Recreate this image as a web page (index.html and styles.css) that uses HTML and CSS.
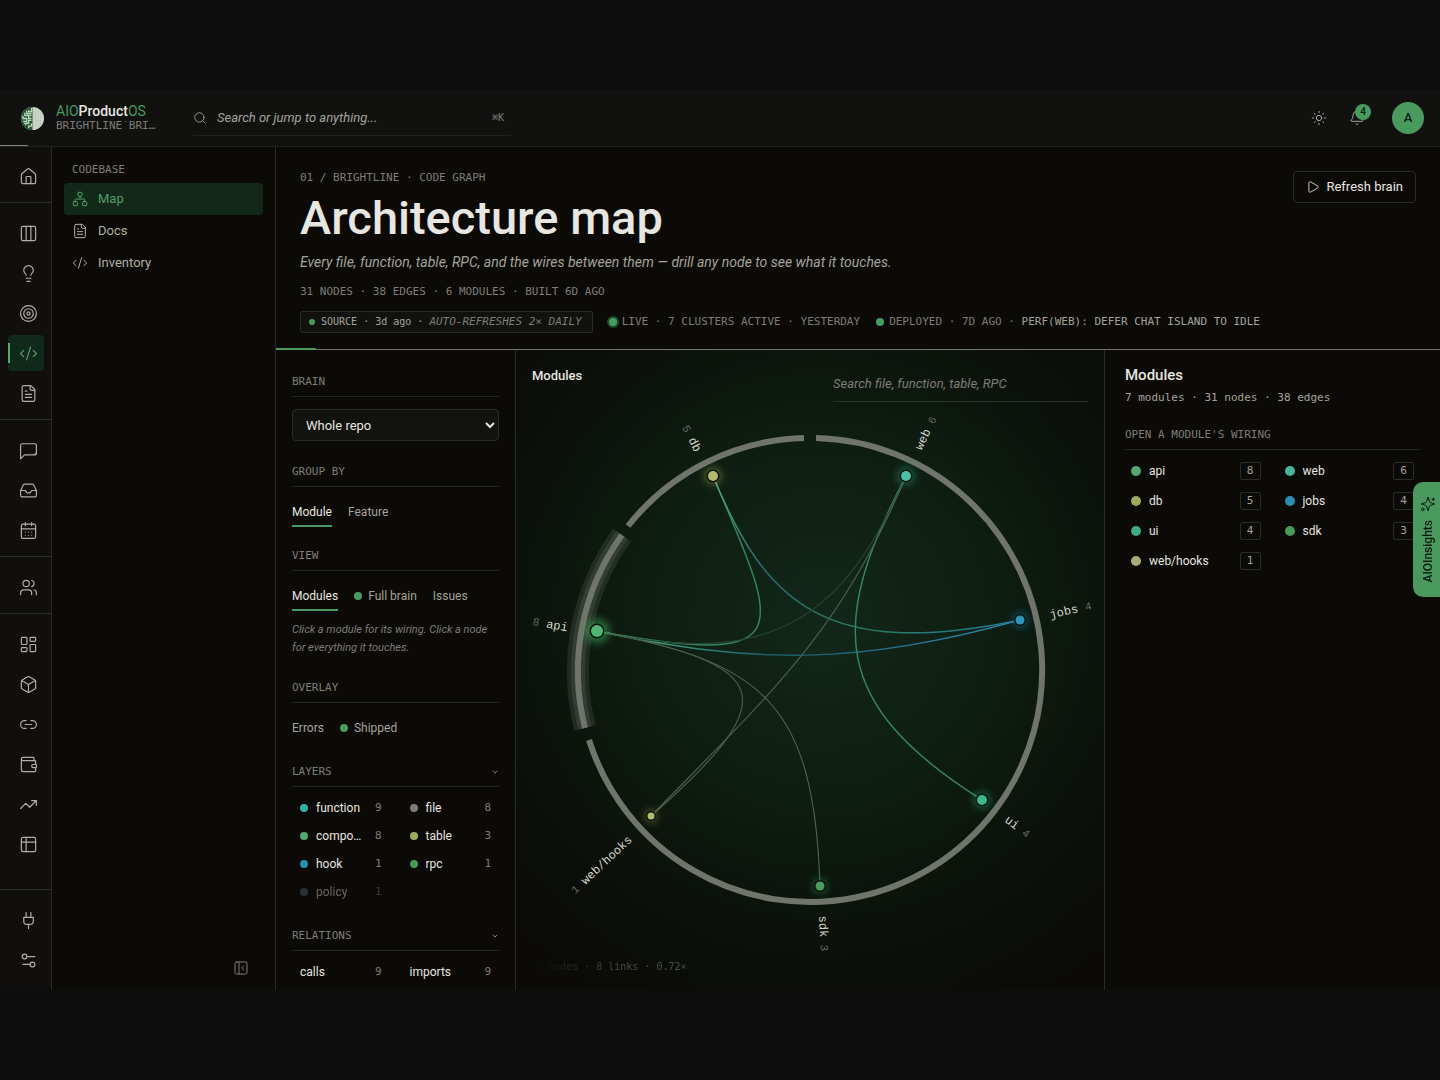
FILE: index.html
```
<!DOCTYPE html>
<html lang="en">
  <head>
    <meta charset="utf-8"/>
    <meta name="viewport" content="width=device-width, initial-scale=1"/>
    <title>Architecture map - AIOProductOS</title>
    <link rel="stylesheet" href="styles.css">
  </head>
  <body>
    <div class="app">
      <header class="topbar">
        <a class="brand" href="#">
          <svg class="brand-logo" viewBox="0 0 24 24">
            <circle cx="12" cy="12" r="12" fill="#cdd8ca"/>
            <path d="M12 0a12 12 0 0 0 0 24z" fill="#2a5236"/>
            <path d="M11 1v4H8V3M11 7H6V4M4 6v3h4v3h3M2 9v3h4v3H2M11 14H8v3H5v2M11 17v3H8v2M3 17h1M9 9h2" fill="none" stroke="#b9dcbc" stroke-width="1.4"/>
            <path d="M13 2v20M15.500 2v20M18 4v16M20.500 6v12" fill="none" stroke="#8fa38e" stroke-width=".7" stroke-dasharray="1 1.500"/>
          </svg>
          <span class="brand-text">
            <span class="brand-name"><em>AIO</em>Product<em>OS</em></span>
            <span class="brand-org">BRIGHTLINE˙BRI…</span>
          </span>
        </a>
        <label class="jump">
          <svg class="icon" viewBox="0 0 24 24"><circle cx="11" cy="11" r="8"/><path d="m21 21-4.300-4.300"/></svg>
          <input type="search" placeholder="Search or jump to anything..." aria-label="Search or jump to anything">
          <kbd>⌘K</kbd>
        </label>
        <div class="topbar-tools">
          <button class="tool" aria-label="Theme">
            <svg class="icon" viewBox="0 0 24 24"><circle cx="12" cy="12" r="4"/><path d="M12 2v2M12 20v2M4.930 4.930l1.410 1.410M17.660 17.660l1.410 1.410M2 12h2M20 12h2M6.340 17.660l-1.410 1.410M19.070 4.930l-1.410 1.410"/></svg>
          </button>
          <button class="tool" aria-label="Notifications">
            <svg class="icon" viewBox="0 0 24 24"><path d="M10.270 21a2 2 0 0 0 3.460 0M3.260 15.330A1 1 0 0 0 4 17h16a1 1 0 0 0 .740-1.670C19.410 13.960 18 12.500 18 8A6 6 0 0 0 6 8c0 4.500-1.410 5.960-2.740 7.330"/></svg>
            <span class="badge">4</span>
          </button>
          <button class="avatar" aria-label="Account">A</button>
        </div>
      </header>

      <nav class="rail" aria-label="Areas">
        <div class="rail-group">
          <a href="#" aria-label="Home"><svg class="icon" viewBox="0 0 24 24"><path d="M15 21v-8a1 1 0 0 0-1-1h-4a1 1 0 0 0-1 1v8"/><path d="M3 10a2 2 0 0 1 .710-1.530l7-6a2 2 0 0 1 2.580 0l7 6A2 2 0 0 1 21 10v9a2 2 0 0 1-2 2H5a2 2 0 0 1-2-2z"/></svg></a>
        </div>
        <div class="rail-group">
          <a href="#" aria-label="Board"><svg class="icon" viewBox="0 0 24 24"><rect x="3" y="3" width="18" height="18" rx="2"/><path d="M9 3v18M15 3v18"/></svg></a>
          <a href="#" aria-label="Ideas"><svg class="icon" viewBox="0 0 24 24"><path d="M15 14c.2-1 .7-1.700 1.500-2.500 1-.9 1.500-2.200 1.500-3.500A6 6 0 0 0 6 8c0 1 .2 2.200 1.500 3.500.7.7 1.300 1.500 1.500 2.500M9 18h6M10 22h4"/></svg></a>
          <a href="#" aria-label="Goals"><svg class="icon" viewBox="0 0 24 24"><circle cx="12" cy="12" r="10"/><circle cx="12" cy="12" r="6"/><circle cx="12" cy="12" r="2"/></svg></a>
          <a href="#" class="active" aria-label="Codebase"><svg class="icon" viewBox="0 0 24 24"><path d="m18 16 4-4-4-4M6 8l-4 4 4 4M14.500 4l-5 16"/></svg></a>
          <a href="#" aria-label="Documents"><svg class="icon" viewBox="0 0 24 24"><path d="M15 2H6a2 2 0 0 0-2 2v16a2 2 0 0 0 2 2h12a2 2 0 0 0 2-2V7z"/><path d="M14 2v4a2 2 0 0 0 2 2h4M10 9H8M16 13H8M16 17H8"/></svg></a>
        </div>
        <div class="rail-group">
          <a href="#" aria-label="Chat"><svg class="icon" viewBox="0 0 24 24"><path d="M21 15a2 2 0 0 1-2 2H7l-5 5V5a2 2 0 0 1 2-2h16a2 2 0 0 1 2 2v10a2 2 0 0 1-2 2" transform="translate(0 .5)"/></svg></a>
          <a href="#" aria-label="Inbox"><svg class="icon" viewBox="0 0 24 24"><path d="M22 12h-6l-2 3h-4l-2-3H2"/><path d="M5.450 5.110 2 12v6a2 2 0 0 0 2 2h16a2 2 0 0 0 2-2v-6l-3.450-6.890A2 2 0 0 0 16.760 4H7.240a2 2 0 0 0-1.790 1.110z"/></svg></a>
          <a href="#" aria-label="Calendar"><svg class="icon" viewBox="0 0 24 24"><rect x="3" y="4" width="18" height="18" rx="2"/><path d="M8 2v4M16 2v4M3 10h18M8 14h.01M12 14h.01M16 14h.01M8 18h.01M12 18h.01M16 18h.01"/></svg></a>
        </div>
        <div class="rail-group">
          <a href="#" aria-label="People"><svg class="icon" viewBox="0 0 24 24"><path d="M16 21v-2a4 4 0 0 0-4-4H6a4 4 0 0 0-4 4v2M22 21v-2a4 4 0 0 0-3-3.870M16 3.130a4 4 0 0 1 0 7.750"/><circle cx="9" cy="7" r="4"/></svg></a>
        </div>
        <div class="rail-group">
          <a href="#" aria-label="Dashboard"><svg class="icon" viewBox="0 0 24 24"><rect x="3" y="3" width="7" height="9" rx="1"/><rect x="14" y="3" width="7" height="5" rx="1"/><rect x="14" y="12" width="7" height="9" rx="1"/><rect x="3" y="16" width="7" height="5" rx="1"/></svg></a>
          <a href="#" aria-label="Packages"><svg class="icon" viewBox="0 0 24 24"><path d="M21 8a2 2 0 0 0-1-1.730l-7-4a2 2 0 0 0-2 0l-7 4A2 2 0 0 0 3 8v8a2 2 0 0 0 1 1.730l7 4a2 2 0 0 0 2 0l7-4A2 2 0 0 0 21 16zM3.300 7l8.700 5 8.700-5M12 22V12"/></svg></a>
          <a href="#" aria-label="Links"><svg class="icon" viewBox="0 0 24 24"><path d="M9 17H7A5 5 0 0 1 7 7h2M15 7h2a5 5 0 1 1 0 10h-2M8 12h8"/></svg></a>
          <a href="#" aria-label="Wallet"><svg class="icon" viewBox="0 0 24 24"><path d="M19 7V4a1 1 0 0 0-1-1H5a2 2 0 0 0 0 4h15a1 1 0 0 1 1 1v4h-3a2 2 0 0 0 0 4h3a1 1 0 0 0 1-1v-2a1 1 0 0 0-1-1M3 5v14a2 2 0 0 0 2 2h15a1 1 0 0 0 1-1v-4"/></svg></a>
          <a href="#" aria-label="Trends"><svg class="icon" viewBox="0 0 24 24"><path d="m22 7-8.500 8.500-5-5L2 17M16 7h6v6"/></svg></a>
          <a href="#" aria-label="Tables"><svg class="icon" viewBox="0 0 24 24"><rect x="3" y="3" width="18" height="18" rx="2"/><path d="M3 9h18M9 3v18"/></svg></a>
        </div>
        <div class="rail-group rail-bottom">
          <a href="#" aria-label="Integrations"><svg class="icon" viewBox="0 0 24 24"><path d="M12 22v-5M9 8V2M15 8V2M18 8v5a4 4 0 0 1-4 4h-4a4 4 0 0 1-4-4V8z"/></svg></a>
          <a href="#" aria-label="Settings"><svg class="icon" viewBox="0 0 24 24"><path d="M20 7h-9M14 17H5"/><circle cx="17" cy="17" r="3"/><circle cx="7" cy="7" r="3"/></svg></a>
        </div>
      </nav>

      <aside class="sidebar">
        <h2 class="mono">CODEBASE</h2>
        <a href="#" class="active"><svg class="icon" viewBox="0 0 24 24"><rect x="16" y="16" width="6" height="6" rx="1"/><rect x="2" y="16" width="6" height="6" rx="1"/><rect x="9" y="2" width="6" height="6" rx="1"/><path d="M5 16v-3a1 1 0 0 1 1-1h12a1 1 0 0 1 1 1v3M12 12V8"/></svg>Map</a>
        <a href="#"><svg class="icon" viewBox="0 0 24 24"><path d="M15 2H6a2 2 0 0 0-2 2v16a2 2 0 0 0 2 2h12a2 2 0 0 0 2-2V7z"/><path d="M14 2v4a2 2 0 0 0 2 2h4M10 9H8M16 13H8M16 17H8"/></svg>Docs</a>
        <a href="#"><svg class="icon" viewBox="0 0 24 24"><path d="m18 16 4-4-4-4M6 8l-4 4 4 4M14.500 4l-5 16"/></svg>Inventory</a>
        <button class="collapse" aria-label="Collapse sidebar"><svg class="icon" viewBox="0 0 24 24"><rect x="3" y="3" width="18" height="18" rx="2"/><path d="M9 3v18M16 15l-3-3 3-3"/></svg></button>
      </aside>

      <main class="page">
        <div class="page-head">
          <div class="page-title">
            <p class="mono">01 / BRIGHTLINE · CODE GRAPH</p>
            <h1>Architecture map</h1>
            <p class="lead">Every file, function, table, RPC, and the wires between them — drill any node to see what it touches.</p>
            <p class="mono">31 NODES · 38 EDGES · 6 MODULES · BUILT 6D AGO</p>
            <div class="status mono">
              <span class="source"><i class="dot small"></i><span>SOURCE · 3d ago · <em>AUTO-REFRESHES 2× DAILY</em></span></span>
              <span class="live"><i class="dot glow"></i>LIVE · 7 CLUSTERS ACTIVE · YESTERDAY</span>
              <span class="deployed"><i class="dot"></i><span>DEPLOYED · 7D AGO · <b>PERF(WEB): DEFER CHAT ISLAND TO IDLE</b></span></span>
            </div>
          </div>
          <button class="refresh"><svg class="icon" viewBox="0 0 24 24"><path d="M5 5a2 2 0 0 1 3.008-1.728l11.997 6.998a2 2 0 0 1 .003 3.458l-12 7A2 2 0 0 1 5 19z"/></svg>Refresh brain</button>
        </div>

        <div class="workspace">
          <section class="filters">
            <div class="filter">
              <h3 class="mono"><label for="brain">BRAIN</label></h3>
              <select id="brain"><option>Whole repo</option></select>
            </div>
            <div class="filter">
              <h3 class="mono">GROUP BY</h3>
              <div class="tabs"><button class="on">Module</button><button>Feature</button></div>
            </div>
            <div class="filter">
              <h3 class="mono">VIEW</h3>
              <div class="tabs"><button class="on">Modules</button><button><i class="dot"></i>Full brain</button><button>Issues</button></div>
              <p class="hint">Click a module for its wiring. Click a node for everything it touches.</p>
            </div>
            <div class="filter">
              <h3 class="mono">OVERLAY</h3>
              <div class="tabs"><button>Errors</button><button><i class="dot"></i>Shipped</button></div>
            </div>
            <div class="filter">
              <h3 class="mono">LAYERS <svg class="icon" viewBox="0 0 24 24"><path d="m6 9 6 6 6-6"/></svg></h3>
              <ul class="legend">
                <li><i class="dot c-teal"></i><span>function</span><b class="mono">9</b></li>
                <li><i class="dot c-grey"></i><span>file</span><b class="mono">8</b></li>
                <li title="component"><i class="dot c-api"></i><span>compo…</span><b class="mono">8</b></li>
                <li><i class="dot c-db"></i><span>table</span><b class="mono">3</b></li>
                <li><i class="dot c-jobs"></i><span>hook</span><b class="mono">1</b></li>
                <li><i class="dot c-sdk"></i><span>rpc</span><b class="mono">1</b></li>
                <li class="off"><i class="dot c-slate"></i><span>policy</span><b class="mono">1</b></li>
              </ul>
            </div>
            <div class="filter">
              <h3 class="mono">RELATIONS <svg class="icon" viewBox="0 0 24 24"><path d="m6 9 6 6 6-6"/></svg></h3>
              <ul class="legend">
                <li><span>calls</span><b class="mono">9</b></li>
                <li><span>imports</span><b class="mono">9</b></li>
              </ul>
            </div>
          </section>

          <section class="graph">
            <div class="graph-bar">
              <h2>Modules</h2>
              <input type="search" placeholder="Search file, function, table, RPC" aria-label="Search the graph">
            </div>
            <svg class="chord" viewBox="0 0 588 640">
              <defs>
                <filter id="glow" x="-1" y="-1" width="3" height="3"><feGaussianBlur stdDeviation="4"/></filter>
                <linearGradient id="db-jobs" gradientUnits="userSpaceOnUse" x1="197" y1="126" x2="504" y2="270"><stop offset="0" stop-color="#4fa870"/><stop offset=".25" stop-color="#2a6670"/><stop offset=".6" stop-color="#2b7a62"/><stop offset="1" stop-color="#277a98"/></linearGradient>
                <linearGradient id="api-jobs" gradientUnits="userSpaceOnUse" x1="81" y1="281" x2="504" y2="270"><stop offset="0" stop-color="#52c08a"/><stop offset=".4" stop-color="#1f5a66"/><stop offset="1" stop-color="#2b86a6"/></linearGradient>
              </defs>

              <!-- links -->
              <g class="links">
                <path class="strong" d="M197 126C262 280 290 320 81 281"/>
                <path d="M197 126C250 255 310 310 504 270" stroke="url(#db-jobs)"/>
                <path d="M81 281C240 315 345 315 504 270" stroke="url(#api-jobs)"/>
                <path class="strong" d="M390 126C312 275 314 354 466 450"/>
                <path class="faint" d="M390 126C325 275 250 318 81 281"/>
                <path class="thin" d="M390 126C326 280 259 339 135 466"/>
                <path class="thin" d="M81 281C255 315 273 345 135 466"/>
                <path class="thin" d="M81 281C245 312 298 350 304 536"/>
              </g>

              <!-- ring -->
              <g class="ring">
                <path class="halo" d="M69 378A232 232 0 0 1 106 185"/>
                <path class="halo inner" d="M69 378A232 232 0 0 1 106 185"/>
                <path d="M300 88A232 232 0 1 1 73 390"/>
                <path d="M69 378A232 232 0 0 1 106 185"/>
                <path d="M112 176A232 232 0 0 1 288 88"/>
              </g>

              <!-- module nodes -->
              <g class="halos" filter="url(#glow)">
                <circle cx="197" cy="126" r="8" fill="#9aa653"/>
                <circle cx="390" cy="126" r="8" fill="#2fa08a"/>
                <circle cx="504" cy="270" r="7" fill="#1f7fa6"/>
                <circle cx="466" cy="450" r="8" fill="#2c9c6f"/>
                <circle cx="304" cy="536" r="7" fill="#2f8146"/>
                <circle cx="135" cy="466" r="6" fill="#8d9440"/>
                <circle cx="81" cy="281" r="12" fill="#3fae62"/>
              </g>
              <g class="nodes">
                <circle cx="197" cy="126" r="5" fill="#b3ba70"/>
                <circle cx="390" cy="126" r="5" fill="#4cc0a4"/>
                <circle cx="504" cy="270" r="4.500" fill="#2e93b8"/>
                <circle cx="466" cy="450" r="5" fill="#3cb88b"/>
                <circle cx="304" cy="536" r="4.500" fill="#4c9d5c"/>
                <circle cx="135" cy="466" r="3.500" fill="#b4bd6a"/>
                <circle cx="81" cy="281" r="6" fill="#4fb673"/>
              </g>

              <g class="names" transform="translate(294 320)">
                <text x="246" y="4" transform="rotate(-64)">web <tspan>6</tspan></text>
                <text x="246" y="4" transform="rotate(-13)">jobs <tspan>4</tspan></text>
                <text x="246" y="4" transform="rotate(37)">ui <tspan>4</tspan></text>
                <text x="246" y="4" transform="rotate(87)">sdk <tspan>3</tspan></text>
                <text class="end" x="-246" y="4" transform="rotate(-43)"><tspan>1</tspan> web/hooks</text>
                <text class="end" x="-246" y="4" transform="rotate(10)"><tspan>8</tspan> api</text>
                <text class="end" x="-246" y="4" transform="rotate(63)"><tspan>5</tspan> db</text>
              </g>
            </svg>
            <p class="graph-note mono">7 nodes · 8 links · 0.72×</p>
          </section>

          <section class="detail">
            <h2>Modules</h2>
            <p class="mono">7 modules · 31 nodes · 38 edges</p>
            <h3 class="mono">OPEN A MODULE'S WIRING</h3>
            <ul class="modules">
              <li><i class="dot c-api"></i><a href="#">api</a><b class="mono">8</b></li>
              <li><i class="dot c-web"></i><a href="#">web</a><b class="mono">6</b></li>
              <li><i class="dot c-db"></i><a href="#">db</a><b class="mono">5</b></li>
              <li><i class="dot c-jobs"></i><a href="#">jobs</a><b class="mono">4</b></li>
              <li><i class="dot c-ui"></i><a href="#">ui</a><b class="mono">4</b></li>
              <li><i class="dot c-sdk"></i><a href="#">sdk</a><b class="mono">3</b></li>
              <li><i class="dot c-hooks"></i><a href="#">web/hooks</a><b class="mono">1</b></li>
            </ul>
          </section>
        </div>
      </main>

      <button class="insights">
        <svg class="icon" viewBox="0 0 24 24"><path d="M9.940 15.500A2 2 0 0 0 8.500 14.060l-6.140-1.580a.5.5 0 0 1 0-.960L8.500 9.940A2 2 0 0 0 9.940 8.500l1.580-6.140a.5.5 0 0 1 .960 0L14.060 8.500A2 2 0 0 0 15.500 9.940l6.140 1.580a.5.5 0 0 1 0 .960L15.500 14.060a2 2 0 0 0-1.440 1.440l-1.580 6.140a.5.5 0 0 1-.960 0zM20 3v4M22 5h-4"/><circle cx="4" cy="20" r="2"/></svg>
        <span>AIOInsights</span>
      </button>
    </div>
  </body>
</html>
```

FILE: styles.css
```
:root {
  color-scheme: dark;
  --bg: #0b0a06;
  --panel: #11110f;
  --line: #2a2a26;
  --text: #e8e6e0;
  --soft: #a5a39b;
  --mute: #7f7d76;
  --green: #4a9a60;
}
* {
  box-sizing: border-box;
}
body {
  margin: 0;
  height: 100vh;
  padding: 90px 0;
  background: #0d0d0d;
  color: var(--text);
  font-family: Roboto, "Liberation Sans", sans-serif;
  font-size: 13px;
  line-height: 16px;
}
h1, h2, h3, p, ul {
  margin: 0;
  padding: 0;
}
ul {
  list-style: none;
}
a {
  color: inherit;
  text-decoration: none;
}
button, input, select {
  font: inherit;
  color: inherit;
  background: none;
  border: 0;
  padding: 0;
  margin: 0;
}
input {
  outline: 0;
  min-width: 0;
  font-style: italic;
}
.icon {
  width: 16px;
  height: 16px;
  flex: none;
  fill: none;
  stroke: currentColor;
  stroke-width: 1.5;
  stroke-linecap: round;
  stroke-linejoin: round;
}
.mono {
  font-family: "DejaVu Sans Mono", "Liberation Mono", monospace;
  font-size: 11px;
  font-weight: 400;
  color: var(--mute);
}
.dot {
  width: 8px;
  height: 8px;
  border-radius: 50%;
  background: var(--green);
  flex: none;
}
.c-teal { background: #2fb3a3; }
.c-grey { background: #7d7c78; }
.c-api { background: #55a873; }
.c-db { background: #9dab5e; }
.c-jobs { background: #2a8fae; }
.c-sdk { background: #4a9a56; }
.c-web { background: #48b39a; }
.c-ui { background: #40aa86; }
.c-hooks { background: #a5ac78; }
.c-slate { background: #5a6a76; }

/* frame */
.app {
  position: relative;
  height: 100%;
  display: grid;
  grid-template: 57px minmax(0, 1fr) / 52px 224px minmax(0, 1fr);
  background: var(--bg);
  overflow: hidden;
}
.topbar {
  grid-column: 1 / -1;
  display: flex;
  align-items: center;
  padding-right: 16px;
  background: var(--panel);
  border-bottom: 1px solid #20201d;
  position: relative;
}
.topbar::after {
  content: "";
  position: absolute;
  left: 0;
  bottom: 0;
  width: 28px;
  height: 1px;
  background: #85857c;
}
.brand {
  display: flex;
  align-items: center;
  gap: 12px;
  width: 171px;
  padding-left: 21px;
}
.brand-logo {
  width: 23px;
  height: 23px;
}
.brand-text {
  display: grid;
}
.brand-name {
  font-size: 14px;
  font-weight: 500;
}
.brand-name em {
  font-style: normal;
  font-weight: 400;
  color: var(--green);
}
.brand-org {
  font: 11px/14px "DejaVu Sans Mono", monospace;
  color: var(--mute);
}
.jump {
  display: flex;
  align-items: center;
  gap: 10px;
  width: 318px;
  height: 36px;
  margin-left: 22px;
  border-bottom: 1px solid #20201f;
  color: var(--soft);
}
.jump .icon {
  width: 14px;
  height: 14px;
}
.jump input {
  flex: 1;
}
::placeholder {
  color: #a5a39b;
  opacity: 1;
}
.jump kbd {
  font: 10px/16px "DejaVu Sans Mono", monospace;
  color: var(--mute);
  padding-right: 7px;
}
.topbar-tools {
  display: flex;
  align-items: center;
  margin-left: auto;
  gap: 6px;
}
.tool {
  position: relative;
  display: grid;
  place-items: center;
  width: 32px;
  height: 32px;
  color: var(--soft);
}
.badge {
  position: absolute;
  top: 2px;
  left: 14px;
  width: 16px;
  height: 16px;
  border-radius: 50%;
  background: var(--green);
  color: #0b1a0e;
  font-size: 10px;
  font-weight: 500;
}
.avatar {
  width: 32px;
  height: 32px;
  margin-left: 13px;
  border-radius: 50%;
  background: var(--green);
  color: #0b1a0e;
  font-weight: 500;
}

/* icon rail */
.rail {
  display: flex;
  flex-direction: column;
  background: #110f0d;
  border-right: 1px solid var(--line);
}
.rail-group {
  display: grid;
  gap: 4px;
  padding: 12px 0 8px 8px;
  border-bottom: 1px solid var(--line);
}
.rail-group:first-child {
  padding-top: 11px;
}
.rail-group:nth-child(5) {
  border-bottom: 0;
}
.rail-bottom {
  margin-top: auto;
  padding-bottom: 12px;
  border-top: 1px solid var(--line);
  border-bottom: 0;
}
.rail a {
  position: relative;
  display: grid;
  place-items: center;
  width: 36px;
  height: 36px;
  padding-left: 4px;
  border-radius: 4px;
  color: #b0aea6;
}
.rail .icon {
  width: 19px;
  height: 19px;
}
.rail a.active {
  background: #10291a;
  color: #5c9b6e;
}
.rail a.active::before {
  content: "";
  position: absolute;
  left: 0;
  top: 8px;
  width: 2px;
  height: 20px;
  background: #5aa874;
}

/* section menu */
.sidebar {
  display: flex;
  flex-direction: column;
  padding: 15px 12px 14px;
  border-right: 1px solid var(--line);
}
.sidebar h2 {
  padding: 0 8px;
  margin-bottom: 5px;
}
.sidebar a {
  display: flex;
  align-items: center;
  gap: 10px;
  height: 32px;
  padding: 0 8px;
  border-radius: 4px;
  color: #b0aea6;
}
.sidebar a.active {
  background: #122818;
  color: #4f9f66;
}
.collapse {
  display: flex;
  margin: auto 14px 0 auto;
  color: var(--mute);
}

/* page header */
.page {
  display: flex;
  flex-direction: column;
  min-width: 0;
}
.page-head {
  position: relative;
  display: flex;
  justify-content: space-between;
  align-items: flex-start;
  padding: 23px 24px 16px;
  border-bottom: 1px solid #74746b;
}
.page-head::after {
  content: "";
  position: absolute;
  left: 0;
  bottom: -1px;
  width: 40px;
  height: 2px;
  background: var(--green);
}
h1 {
  font-size: 47px;
  line-height: 56px;
  font-weight: 500;
  margin: 4px 0 8px;
}
.lead {
  color: var(--soft);
  font-size: 14px;
  font-style: italic;
  margin-bottom: 14px;
}
.status {
  display: flex;
  align-items: center;
  gap: 16px;
  margin-top: 11px;
  white-space: nowrap;
}
.status > span {
  display: flex;
  align-items: center;
  gap: 5px;
}
.status .source {
  gap: 6px;
  padding: 2px 10px 2px 8px;
  border: 1px solid var(--line);
  border-radius: 2px;
  background: #11120e;
  color: var(--soft);
  font-size: 10px;
}
.status em {
  color: var(--mute);
  font-size: 11px;
}
.status b {
  font-weight: 400;
  color: var(--soft);
}
.dot.small {
  width: 6px;
  height: 6px;
}
.dot.glow {
  box-shadow: 0 0 0 2px #1c4a2a;
}
.refresh {
  display: flex;
  align-items: center;
  gap: 6px;
  height: 32px;
  margin-top: 1px;
  padding: 0 12px;
  border: 1px solid var(--line);
  border-radius: 4px;
}
.refresh .icon {
  width: 14px;
  height: 14px;
}

/* workspace */
.workspace {
  flex: 1;
  min-height: 0;
  display: grid;
  grid-template-columns: 240px minmax(0, 1fr) 336px;
}
.filters {
  display: flex;
  flex-direction: column;
  gap: 20px;
  padding: 23px 16px 0;
  border-right: 1px solid var(--line);
  overflow: hidden;
  font-size: 12px;
}
.filter {
  flex: none;
}
.filter h3 {
  display: flex;
  justify-content: space-between;
  align-items: center;
  line-height: 18px;
  padding-bottom: 5px;
  border-bottom: 1px solid #22221e;
}
.filter h3 .icon {
  width: 8px;
  height: 8px;
  stroke-width: 3;
}
.filter select {
  display: block;
  width: 100%;
  height: 32px;
  margin: 12px 0 2px;
  padding-left: 9px;
  border: 1px solid var(--line);
  border-radius: 4px;
  background: #12120f;
  font-size: 13px;
}
.tabs {
  display: flex;
  gap: 16px;
  margin-top: 11px;
}
.tabs button {
  display: flex;
  align-items: center;
  gap: 6px;
  height: 29px;
  border-bottom: 2px solid transparent;
  color: var(--soft);
}
.tabs .on {
  border-color: var(--green);
  color: var(--text);
}
.hint {
  margin: 10px 0 2px;
  color: var(--mute);
  font-size: 11px;
  line-height: 18px;
  font-style: italic;
}
.legend {
  display: grid;
  grid-template-columns: 1fr 1fr;
  column-gap: 12px;
  margin: 7px 0 1px;
}
.legend li {
  display: flex;
  align-items: center;
  gap: 8px;
  height: 28px;
  min-width: 0;
  padding: 0 8px;
}
.legend span {
  flex: 1;
}
.off {
  opacity: .4;
}

/* graph */
.graph {
  position: relative;
  min-height: 0;
  background: radial-gradient(circle at 52% 42%, #12271a, #0e1e12 35%, #0b110a 65%, #0b0a06 90%);
}
.graph-bar {
  position: absolute;
  inset: 0 16px auto;
  display: flex;
  justify-content: space-between;
  align-items: flex-start;
  padding-top: 16px;
}
.graph-bar h2 {
  font-size: 13px;
  line-height: 20px;
  font-weight: 500;
}
.graph-bar input {
  width: 255px;
  height: 36px;
  border-bottom: 1px solid #29332a;
}
.graph-bar ::placeholder {
  color: var(--mute);
}
.chord {
  display: block;
  width: 100%;
  height: 100%;
}
.links {
  fill: none;
  stroke-width: 1.5;
}
.links .strong {
  stroke: #37825f;
}
.links .thin {
  stroke: #4a5f49;
  stroke-width: 1.2;
}
.links .faint {
  stroke: #28432e;
  stroke-width: 1.2;
}
.ring path {
  fill: none;
  stroke: #6f756b;
  stroke-width: 6;
}
.ring .halo {
  stroke: #9aa396;
  stroke-opacity: .15;
  stroke-width: 22;
}
.ring .inner {
  stroke-width: 14;
}
.halos {
  opacity: .6;
}
.nodes circle {
  stroke: #0a140c;
  stroke-width: 3;
  paint-order: stroke;
}
.names {
  font-family: "Liberation Mono", monospace;
  font-size: 12px;
  fill: #d6d6cc;
}
.names tspan {
  fill: #666a60;
  font-size: 11px;
}
.names .end {
  text-anchor: end;
}
.graph-note {
  position: absolute;
  left: 20px;
  bottom: 15px;
  font-size: 10px;
  background: linear-gradient(90deg, #0b0e08, #4c4f48 60%);
  background-clip: text;
  color: transparent;
}

/* detail */
.detail {
  padding: 16px 20px;
  border-left: 1px solid var(--line);
}
.detail h2 {
  font-size: 15px;
  line-height: 18px;
  font-weight: 500;
  margin-bottom: 6px;
}
.detail p {
  color: var(--soft);
}
.detail h3 {
  padding-bottom: 6px;
  margin: 21px 0 6px;
  border-bottom: 1px solid #22221e;
}
.modules {
  display: grid;
  grid-template-columns: 1fr 1fr;
  column-gap: 12px;
  font-size: 12px;
}
.modules li {
  display: flex;
  align-items: center;
  gap: 8px;
  height: 30px;
  padding: 0 6px;
}
.modules .dot {
  width: 10px;
  height: 10px;
}
.modules a {
  flex: 1;
}
.modules b {
  width: 21px;
  border: 1px solid var(--line);
  border-radius: 2px;
  text-align: center;
  color: var(--soft);
}

/* side tab */
.insights {
  position: absolute;
  right: 0;
  top: 392px;
  display: flex;
  flex-direction: column;
  align-items: center;
  gap: 8px;
  width: 27px;
  padding: 14px 0 14px 2px;
  border-radius: 10px 0 0 10px;
  background: var(--green);
  color: #0b1a0e;
  font-size: 12px;
  font-weight: 500;
}
.insights span {
  writing-mode: vertical-rl;
  transform: rotate(180deg);
}
```
